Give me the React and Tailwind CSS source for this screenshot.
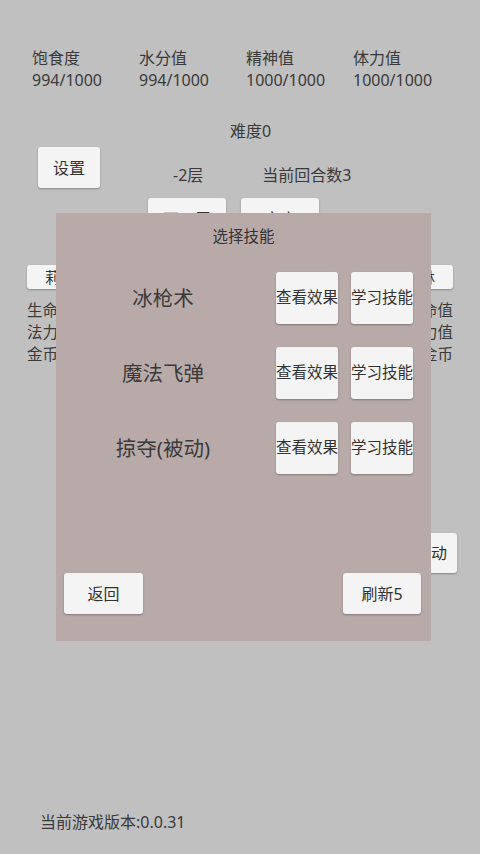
const btn =
  "flex items-center justify-center rounded-[3px] bg-[#f4f4f4] text-[#333] shadow-[0_1px_2px_rgba(0,0,0,0.3)]";

const stats = [
  { label: "饱食度", value: "994/1000" },
  { label: "水分值", value: "994/1000" },
  { label: "精神值", value: "1000/1000" },
  { label: "体力值", value: "1000/1000" },
];

const skills = ["冰枪术", "魔法飞弹", "掠夺(被动)"];

const SkillModal = () => (
  <div className="absolute left-[56px] top-[213px] flex h-[428px] w-[375px] flex-col bg-[#b9aaaa]">
    <div className="pt-[12px] text-center text-[15.5px] leading-[22px] text-[#333]">选择技能</div>

    <div className="mt-[25px] flex flex-col gap-[23px]">
      {skills.map((name) => (
        <div key={name} className="flex items-center">
          <div className="w-[214px] text-center text-[20.5px] leading-[28px] text-[#3a3a3a]">{name}</div>
          <button className={`${btn} ml-[6px] h-[52px] w-[62px] whitespace-nowrap text-[15.5px]`}>查看效果</button>
          <button className={`${btn} ml-[13px] h-[52px] w-[62px] whitespace-nowrap text-[15.5px]`}>学习技能</button>
        </div>
      ))}
    </div>

    <div className="mt-auto flex justify-between pb-[27px] pl-[8px] pr-[10px]">
      <button className={`${btn} h-[41px] w-[79px] text-[16px]`}>返回</button>
      <button className={`${btn} h-[41px] w-[78px] text-[16px]`}>刷新5</button>
    </div>
  </div>
);

export default function App() {
  return (
    <div
      className="relative h-[854px] w-[480px] overflow-hidden bg-[#c0c0c0] text-[#3a3a3a]"
      style={{ fontFamily: '"Noto Sans", "Noto Sans CJK SC", sans-serif' }}
    >
      <div className="flex flex-col">
        {/* survival stats */}
        <div className="flex pl-[32px] pt-[47px] text-[16px] leading-[22px]">
          {stats.map((s) => (
            <div key={s.label} className="w-[107px]">
              <div>{s.label}</div>
              <div>{s.value}</div>
            </div>
          ))}
        </div>

        <div className="mt-[29px] pl-[230px] text-[16px] leading-[22px]">难度0</div>

        <div className="mt-[5px] flex items-start pl-[38px]">
          <button className={`${btn} h-[41px] w-[62px] text-[16px]`}>设置</button>
          <div className="ml-[73px] mt-[17px] text-[16px] leading-[22px]">-2层</div>
          <div className="ml-[59px] mt-[17px] text-[16px] leading-[22px]">当前回合数3</div>
        </div>

        <div className="mt-[10px] flex gap-[15px] pl-[148px]">
          <button className={`${btn} h-[41px] w-[78px] text-[16px]`}>下一层</button>
          <button className={`${btn} h-[41px] w-[78px] text-[16px]`}>商店</button>
        </div>

        <div className="mt-[26px] flex justify-between px-[27px]">
          <button className={`${btn} h-[24px] w-[66px] text-[15px]`}>莉莉</button>
          <button className={`${btn} h-[24px] w-[66px] text-[15px]`}>树林</button>
        </div>

        <div className="mt-[10px] flex justify-between px-[27px] text-[15.5px] leading-[22px]">
          <div>
            <div>生命值:100</div>
            <div>法力值:50</div>
            <div>金币:20</div>
          </div>
          <div className="text-right">
            <div>生命值</div>
            <div>法力值</div>
            <div>金币</div>
          </div>
        </div>

        <div className="mt-[168px] flex justify-end pr-[23px]">
          <button className={`${btn} h-[40px] w-[52px] text-[16px]`}>自动</button>
        </div>

        <div className="mt-[238px] pl-[40px] text-[16px] leading-[22px]">当前游戏版本:0.0.31</div>
      </div>

      <SkillModal />
    </div>
  );
}
